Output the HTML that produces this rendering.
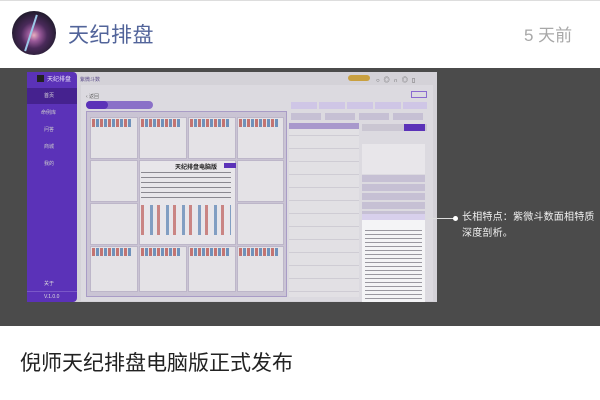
<!DOCTYPE html>
<html><head><meta charset="utf-8"><style>
*{margin:0;padding:0;box-sizing:border-box}
body{width:600px;height:400px;background:#fff;font-family:"Liberation Sans","Noto Sans CJK SC",sans-serif;position:relative;overflow:hidden}
.abs{position:absolute}
.cell{position:absolute;background:#e4e2e6;border:1px solid #bdb6c9}
</style></head><body>
<div class="abs" style="left:0;top:0;width:600px;height:1px;background:#ddd"></div>
<div class="abs" style="left:12px;top:11px;width:44px;height:44px;border-radius:50%;background:radial-gradient(circle at 50% 55%,#e8b0c0 0,#9a5a9a 18%,#4a2a5a 40%,#1e1a2a 75%)"></div>
<div class="abs" style="left:30px;top:14px;width:2px;height:38px;background:#9cc8e8;transform:rotate(18deg)"></div>
<div class="abs" style="left:68px;top:19px;font-size:21px;color:#52649a;letter-spacing:0.5px">天纪排盘</div>
<div class="abs" style="left:524px;top:21px;font-size:17px;color:#a8a8a8">5 天前</div>

<div class="abs" style="left:0;top:68px;width:600px;height:258px;background:#4b4b4b"></div>
<div class="abs" style="left:27px;top:72px;width:410px;height:230px;background:#d4d2d8"></div>
<div class="abs" style="left:27px;top:72px;width:50px;height:230px;background:#5b32b8;border-radius:0 4px 4px 0"></div>
<div class="abs" style="left:27px;top:88px;width:50px;height:16px;background:#45228f"></div>
<div class="abs" style="left:37px;top:75px;width:7px;height:7px;background:#222"></div>
<div class="abs" style="left:47px;top:74px;font-size:6px;color:#e8e0f8">天纪排盘</div>
<div class="abs" style="left:44px;top:92px;font-size:5px;color:#ddd">首页</div>
<div class="abs" style="left:41px;top:109px;font-size:5px;color:#ccc">命例库</div>
<div class="abs" style="left:44px;top:126px;font-size:5px;color:#ccc">问答</div>
<div class="abs" style="left:44px;top:143px;font-size:5px;color:#ccc">商城</div>
<div class="abs" style="left:44px;top:160px;font-size:5px;color:#ccc">我的</div>
<div class="abs" style="left:44px;top:280px;font-size:5px;color:#ddd">关于</div>
<div class="abs" style="left:27px;top:291px;width:50px;height:1px;background:#7a58c8"></div>
<div class="abs" style="left:44px;top:294px;font-size:5px;color:#ddd">V.1.0.0</div>
<div class="abs" style="left:80px;top:76px;font-size:5px;color:#5a4a8a">紫微斗数</div>
<div class="abs" style="left:348px;top:75px;width:22px;height:6px;background:#c9a040;border-radius:3px"></div>
<div class="abs" style="left:376px;top:75px;font-size:6px;color:#555;letter-spacing:4px">○◎∩◎▯</div>
<div class="abs" style="left:81px;top:85px;width:352px;height:216px;background:#dcdae0"></div>
<div class="abs" style="left:86px;top:93px;font-size:5px;color:#666">‹ 返回</div>
<div class="abs" style="left:411px;top:91px;width:16px;height:7px;border:1px solid #8a6ad0"></div>
<div class="abs" style="left:86px;top:101px;width:67px;height:8px;background:#8a70c8;border-radius:4px"></div>
<div class="abs" style="left:86px;top:101px;width:22px;height:8px;background:#5b32b8;border-radius:4px"></div>
<div class="abs" style="left:291px;top:102px;width:136px;height:7px;background:repeating-linear-gradient(90deg,#cfc6e6 0 26px,#dcdae0 26px 28px)"></div>
<div class="abs" style="left:291px;top:113px;width:136px;height:7px;background:repeating-linear-gradient(90deg,#c6c0d4 0 30px,#dcdae0 30px 34px)"></div>
<div class="abs" style="left:86px;top:111px;width:201px;height:186px;background:#cac4d4;border:1px solid #a99cc6"></div>
<div class="cell" style="left:90px;top:117px;width:48px;height:42px"></div>
<div class="cell" style="left:139px;top:117px;width:48px;height:42px"></div>
<div class="cell" style="left:188px;top:117px;width:48px;height:42px"></div>
<div class="cell" style="left:237px;top:117px;width:47px;height:42px"></div>
<div class="cell" style="left:90px;top:160px;width:48px;height:42px"></div>
<div class="cell" style="left:237px;top:160px;width:47px;height:42px"></div>
<div class="cell" style="left:90px;top:203px;width:48px;height:42px"></div>
<div class="cell" style="left:237px;top:203px;width:47px;height:42px"></div>
<div class="cell" style="left:90px;top:246px;width:48px;height:46px"></div>
<div class="cell" style="left:139px;top:246px;width:48px;height:46px"></div>
<div class="cell" style="left:188px;top:246px;width:48px;height:46px"></div>
<div class="cell" style="left:237px;top:246px;width:47px;height:46px"></div>
<div class="cell" style="left:139px;top:160px;width:97px;height:85px;background:#e8e6ea"></div>
<div class="abs" style="left:175px;top:162px;font-size:6px;color:#222;font-weight:bold">天纪排盘电脑版</div>
<div class="abs" style="left:224px;top:163px;width:12px;height:5px;background:#5b32b8"></div>
<div class="abs" style="left:141px;top:172px;width:90px;height:30px;background:repeating-linear-gradient(180deg,#8a8890 0 1px,#e8e6ea 1px 5px)"></div>
<div class="abs" style="left:141px;top:205px;width:90px;height:30px;background:repeating-linear-gradient(90deg,#b5443f 0 3px,#e8e6ea 3px 9px,#3d6ea8 9px 12px,#e8e6ea 12px 16px);opacity:.6"></div>
<div class="abs" style="left:92px;top:119px;width:40px;height:8px;background:repeating-linear-gradient(90deg,#b5443f 0 3px,#e4e2e6 3px 4px,#3d6ea8 4px 7px,#e4e2e6 7px 8px);opacity:.7"></div>
<div class="abs" style="left:141px;top:119px;width:40px;height:8px;background:repeating-linear-gradient(90deg,#b5443f 0 3px,#e4e2e6 3px 4px,#3d6ea8 4px 7px,#e4e2e6 7px 8px);opacity:.7"></div>
<div class="abs" style="left:190px;top:119px;width:40px;height:8px;background:repeating-linear-gradient(90deg,#b5443f 0 3px,#e4e2e6 3px 4px,#3d6ea8 4px 7px,#e4e2e6 7px 8px);opacity:.7"></div>
<div class="abs" style="left:239px;top:119px;width:40px;height:8px;background:repeating-linear-gradient(90deg,#b5443f 0 3px,#e4e2e6 3px 4px,#3d6ea8 4px 7px,#e4e2e6 7px 8px);opacity:.7"></div>
<div class="abs" style="left:92px;top:248px;width:40px;height:8px;background:repeating-linear-gradient(90deg,#b5443f 0 3px,#e4e2e6 3px 4px,#3d6ea8 4px 7px,#e4e2e6 7px 8px);opacity:.7"></div>
<div class="abs" style="left:141px;top:248px;width:40px;height:8px;background:repeating-linear-gradient(90deg,#b5443f 0 3px,#e4e2e6 3px 4px,#3d6ea8 4px 7px,#e4e2e6 7px 8px);opacity:.7"></div>
<div class="abs" style="left:190px;top:248px;width:40px;height:8px;background:repeating-linear-gradient(90deg,#b5443f 0 3px,#e4e2e6 3px 4px,#3d6ea8 4px 7px,#e4e2e6 7px 8px);opacity:.7"></div>
<div class="abs" style="left:239px;top:248px;width:40px;height:8px;background:repeating-linear-gradient(90deg,#b5443f 0 3px,#e4e2e6 3px 4px,#3d6ea8 4px 7px,#e4e2e6 7px 8px);opacity:.7"></div>
<div class="abs" style="left:289px;top:123px;width:70px;height:174px;background:repeating-linear-gradient(180deg,#e2e0e4 0 12px,#cfccd4 12px 13px)"></div>
<div class="abs" style="left:289px;top:123px;width:70px;height:6px;background:#a898cc"></div>
<div class="abs" style="left:362px;top:124px;width:65px;height:7px;background:#cac6d2"></div>
<div class="abs" style="left:404px;top:124px;width:21px;height:7px;background:#5b32b8"></div>
<div class="abs" style="left:362px;top:144px;width:63px;height:30px;background:#e8e6ea"></div>
<div class="abs" style="left:362px;top:175px;width:63px;height:53px;background:repeating-linear-gradient(180deg,#c6c0d4 0 7px,#dcdae0 7px 9px)"></div>
<div class="abs" style="left:362px;top:214px;width:63px;height:88px;background:#f4f4f6"></div>
<div class="abs" style="left:362px;top:214px;width:63px;height:6px;background:#d8d0ec"></div>
<div class="abs" style="left:365px;top:230px;width:57px;height:70px;background:repeating-linear-gradient(180deg,#9a98a0 0 1px,#f4f4f6 1px 4px)"></div>
<div class="abs" style="left:428px;top:218px;width:27px;height:1px;background:#ddd"></div>
<div class="abs" style="left:453px;top:216px;width:5px;height:5px;border-radius:50%;background:#fff"></div>
<div class="abs" style="left:462px;top:210px;font-size:10px;line-height:16px;color:#f0f0f0;white-space:nowrap;letter-spacing:0.2px">长相特点：紫微斗数面相特质<br>深度剖析。</div>

<div class="abs" style="left:20px;top:347px;font-size:21px;color:#222">倪师天纪排盘电脑版正式发布</div>
</body></html>
